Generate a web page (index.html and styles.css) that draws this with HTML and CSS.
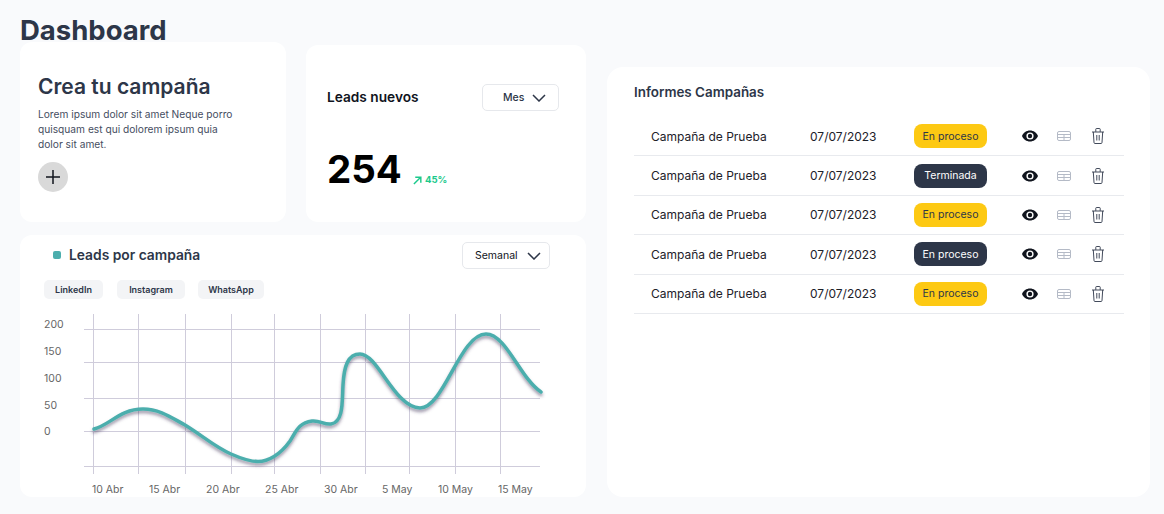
FILE: index.html
```html
<!DOCTYPE html>
<html lang="es">
<head>
<meta charset="utf-8">
<title>Dashboard</title>
<link rel="stylesheet" href="styles.css">
</head>
<body>
<svg class="defs" width="0" height="0" aria-hidden="true">
  <defs>
    <symbol id="eye" viewBox="0 0 16 12"><path fill="#10141d" fill-rule="evenodd" d="M8 .5C4.400.5 1.400 2.700 0 6c1.400 3.300 4.400 5.500 8 5.500s6.600-2.200 8-5.500C14.600 2.700 11.600.5 8 .5ZM8 9.600A3.600 3.600 0 1 1 8 2.400a3.600 3.600 0 0 1 0 7.200Z"/><circle cx="8" cy="6" r="2.200" fill="#10141d"/></symbol>
    <symbol id="table" viewBox="0 0 14 10"><g fill="none" stroke="#b4bac6" stroke-width="1"><rect x=".5" y=".5" width="13" height="9" rx="1.500"/><path d="M.5 3.500h13M.5 6.500h13M7 3.500v6"/></g></symbol>
    <symbol id="trash" viewBox="0 0 14 16"><g fill="none" stroke="#2d3648" stroke-width=".9"><path d="M1 4h12M4.800 3.800V1.200q0-.7.7-.7h3q.7 0 .7.700v2.600M2.300 4l.7 10.500q.1 1 1 1h6q.9 0 1-1L11.700 4M5.800 7v5.500M8.200 7v5.500"/></g></symbol>
    <symbol id="chev" viewBox="0 0 14 8"><path d="M1 1l6 6 6-6" fill="none" stroke="#2d3648" stroke-width="1.500"/></symbol>
  </defs>
</svg>
<div class="page">
  <h1 class="page-title">Dashboard</h1>
  <div class="layout">
    <div class="left">
      <div class="top-row">
        <section class="card create">
          <h2 class="create-title">Crea tu campaña</h2>
          <p class="create-text">Lorem ipsum dolor sit amet Neque porro quisquam est qui dolorem ipsum quia dolor sit amet.</p>
          <button class="add-btn" aria-label="Añadir"><svg width="14" height="14" viewBox="0 0 14 14"><path d="M7 0v14M0 7h14" stroke="#10141d" stroke-width="1.500"/></svg></button>
        </section>
        <section class="card leads">
          <div class="leads-head">
            <h2 class="leads-title">Leads nuevos</h2>
            <div class="select select-mes"><span>Mes</span><svg class="chev"><use href="#chev"/></svg></div>
          </div>
          <div class="leads-value">
            <span class="big-num">254</span>
            <span class="delta"><svg width="9" height="9" viewBox="0 0 10 10"><path d="M1 9l7.500-7.500M2.500 1.300h6.200v6.200" fill="none" stroke="#1cc98c" stroke-width="1.600"/></svg>45%</span>
          </div>
        </section>
      </div>
      <section class="card chart">
        <div class="chart-head">
          <div class="chart-title"><i class="dot"></i><h2>Leads por campaña</h2></div>
          <div class="select select-week"><span>Semanal</span><svg class="chev"><use href="#chev"/></svg></div>
        </div>
        <div class="pills">
          <span class="pill pill-a">LinkedIn</span>
          <span class="pill pill-b">Instagram</span>
          <span class="pill pill-c">WhatsApp</span>
        </div>
        <svg class="plot" width="566" height="187" viewBox="20 310 566 187">
          <defs>
            <filter id="sh" x="-5%" y="-10%" width="110%" height="130%"><feDropShadow dx="0" dy="2.500" stdDeviation="1.500" flood-color="#3a2f55" flood-opacity=".5"/></filter>
          </defs>
          <g stroke="#cfccdb" stroke-width="1">
            <path d="M93.500 314v160M138.500 314v160M185.500 314v160M231.500 314v160M274.500 314v160M320.500 314v160M365.500 314v160M409.500 314v160M455.500 314v160M500.500 314v160"/>
            <path d="M84 329.500h456M84 362.500h456M84 398.500h456M84 431.500h456M84 466.500h456"/>
          </g>
          <path d="M94 429C110 425 120 409 143 409C160 409 172 418 185 425C203 436 215 447 231 454C240 458 250 461.500 258 461.500C268 461.500 280 455 290 441C296 432 298 423 312 421C320 420 324 425 331 424C344 422 342 400 343 385C344 366 348 354 360 354C378 354 394 407 420 408C444 408 460 334 486 334C506 334 520 378 541 392" fill="none" stroke="#4caead" stroke-width="3.500" stroke-linecap="round" filter="url(#sh)"/>
          <g class="axis-y">
            <text x="44" y="328">200</text>
            <text x="44" y="355">150</text>
            <text x="44" y="382">100</text>
            <text x="44" y="409">50</text>
            <text x="44" y="435">0</text>
          </g>
          <g class="axis-x">
            <text x="92" y="493">10 Abr</text>
            <text x="149" y="493">15 Abr</text>
            <text x="206" y="493">20 Abr</text>
            <text x="265" y="493">25 Abr</text>
            <text x="324" y="493">30 Abr</text>
            <text x="382" y="493">5 May</text>
            <text x="438" y="493">10 May</text>
            <text x="498" y="493">15 May</text>
          </g>
        </svg>
      </section>
    </div>
    <section class="card reports">
      <h2 class="reports-title">Informes Campañas</h2>
      <div class="rows">
        <div class="row"><span>Campaña de Prueba</span><span>07/07/2023</span><span class="badge busy">En proceso</span><svg class="i-eye"><use href="#eye"/></svg><svg class="i-table"><use href="#table"/></svg><svg class="i-trash"><use href="#trash"/></svg></div>
        <div class="row"><span>Campaña de Prueba</span><span>07/07/2023</span><span class="badge done">Terminada</span><svg class="i-eye"><use href="#eye"/></svg><svg class="i-table"><use href="#table"/></svg><svg class="i-trash"><use href="#trash"/></svg></div>
        <div class="row"><span>Campaña de Prueba</span><span>07/07/2023</span><span class="badge busy">En proceso</span><svg class="i-eye"><use href="#eye"/></svg><svg class="i-table"><use href="#table"/></svg><svg class="i-trash"><use href="#trash"/></svg></div>
        <div class="row"><span>Campaña de Prueba</span><span>07/07/2023</span><span class="badge done">En proceso</span><svg class="i-eye"><use href="#eye"/></svg><svg class="i-table"><use href="#table"/></svg><svg class="i-trash"><use href="#trash"/></svg></div>
        <div class="row"><span>Campaña de Prueba</span><span>07/07/2023</span><span class="badge busy">En proceso</span><svg class="i-eye"><use href="#eye"/></svg><svg class="i-table"><use href="#table"/></svg><svg class="i-trash"><use href="#trash"/></svg></div>
      </div>
    </section>
  </div>
</div>
</body>
</html>
```

FILE: styles.css
```css
* { box-sizing: border-box; }
html, body { margin: 0; height: 100%; }
body {
  background: #f9fafc;
  font-family: Inter, "Liberation Sans", sans-serif;
  color: #2d3648;
  overflow: hidden;
}
.defs { display: block; height: 0; }
h1, h2, p { margin: 0; }
.page { padding: 16px 14px 0 20px; }
.page-title {
  font-size: 27.5px;
  line-height: 28px;
  font-weight: 700;
  margin-bottom: -2px;
}
.layout {
  display: grid;
  grid-template-columns: 566px 543px;
  column-gap: 21px;
  align-items: start;
}
.card { background: #fff; border-radius: 12px; }
.left { display: flex; flex-direction: column; }
.top-row { display: flex; gap: 20px; align-items: flex-end; height: 180px; }

.create { width: 266px; height: 180px; padding: 32px 18px 0; position: relative; z-index: 1; }
.create-title { font-size: 21px; line-height: 26px; font-weight: 600; }
.create-text { font-size: 10.2px; line-height: 15px; color: #454d5f; margin-top: 7px; width: 205px; }
.add-btn {
  display: flex; align-items: center; justify-content: center;
  width: 30px; height: 30px; margin-top: 10px; padding: 0;
  border: 0; border-radius: 50%; background: #d9d9d9;
}

.leads { width: 280px; height: 177px; padding: 39px 27px 0 21px; }
.leads-head { display: flex; align-items: center; justify-content: space-between; }
.leads-title { font-size: 13.7px; line-height: 27px; font-weight: 600; color: #10141d; }
.select {
  display: flex; align-items: center; height: 27px;
  border: 1px solid #e6e8ec; border-radius: 5px; background: #fff;
  font-size: 10.5px;
}
.select-mes { width: 77px; padding-left: 20px; gap: 8px; font-weight: 500; }
.select-week { width: 88px; padding-left: 12px; gap: 9px; color: #10141d; }
.chev { width: 14px; height: 8px; }
.leads-value { display: flex; align-items: flex-end; gap: 11px; margin-top: 34px; }
.big-num { font-size: 38.5px; line-height: 48px; font-weight: 700; color: #000; }
.delta { display: flex; align-items: center; gap: 3px; margin-bottom: 7px; font-size: 9.6px; line-height: 12px; font-weight: 700; color: #1cc98c; }

.chart { height: 262px; margin-top: 13px; display: flex; flex-direction: column; }
.chart-head { display: flex; justify-content: space-between; padding: 7px 36px 0 33px; align-items: center; }
.chart-title { display: flex; align-items: center; gap: 8px; margin-top: -2px; }
.chart-title h2 { font-size: 13.8px; font-weight: 600; }
.dot { width: 8px; height: 8px; border-radius: 2px; background: #4caead; }
.pills { display: flex; margin: 11px 0 0 24px; }
.pill {
  display: flex; align-items: center; justify-content: center;
  height: 19px; border-radius: 5px; background: #f3f4f6;
  font-size: 9px; font-weight: 600;
}
.pill-a { width: 59px; margin-right: 14px; }
.pill-b { width: 68px; margin-right: 13px; }
.pill-c { width: 66px; }
.plot { display: block; margin-top: 11px; }
.plot text { font-family: Inter, "Liberation Sans", sans-serif; font-size: 10.5px; fill: #666; }

.reports { height: 430px; margin-top: 25px; padding: 17px 26px 0 27px; border-radius: 16px; }
.reports-title { font-size: 13.4px; line-height: 17px; font-weight: 600; color: #2d3648; }
.rows { margin-top: 16px; }
.row {
  display: grid;
  grid-template-columns: 159px 104px 73px 35px 16px 19px 14px 20px 14px;
  align-items: center;
  height: 39.4px;
  border-bottom: 1px solid #e8eaee;
  padding-left: 17px;
  font-size: 12px;
  color: #1d2129;
}
.badge {
  grid-column: 3;
  display: flex; align-items: center; justify-content: center;
  height: 24px; border-radius: 8px; font-size: 10.5px;
}
.busy { background: #fdc913; color: #2d3648; }
.done { background: #2d3648; color: #fff; }
.i-eye { grid-column: 5; width: 16px; height: 12px; }
.i-table { grid-column: 7; width: 14px; height: 10px; }
.i-trash { grid-column: 9; width: 14px; height: 16px; }
```
